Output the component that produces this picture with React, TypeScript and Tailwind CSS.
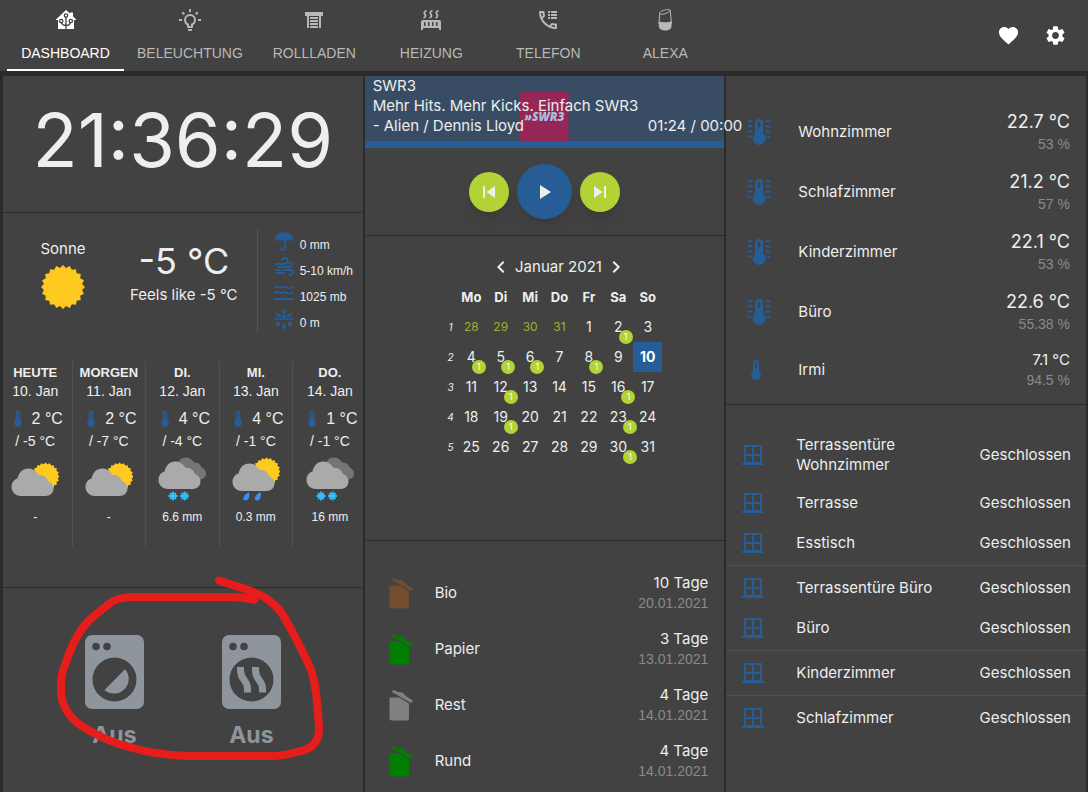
import React from 'react';
import { MdChevronLeft, MdChevronRight, MdFavorite, MdPlayArrow, MdSettings, MdSkipNext, MdSkipPrevious } from 'react-icons/md';

type ForecastKind = 'partly' | 'snow' | 'shower';

interface ForecastDay {
  day: string;
  date: string;
  high: string;
  low: string;
  kind: ForecastKind;
  amount: string;
}

interface Sensor {
  room: string;
  temp: string;
  humidity: string;
}

// --- Data ---
const forecast: ForecastDay[] = [
  { day: 'HEUTE', date: '10. Jan', high: '2 °C', low: '/ -5 °C', kind: 'partly', amount: '-' },
  { day: 'MORGEN', date: '11. Jan', high: '2 °C', low: '/ -7 °C', kind: 'partly', amount: '-' },
  { day: 'DI.', date: '12. Jan', high: '4 °C', low: '/ -4 °C', kind: 'snow', amount: '6.6 mm' },
  { day: 'MI.', date: '13. Jan', high: '4 °C', low: '/ -1 °C', kind: 'shower', amount: '0.3 mm' },
  { day: 'DO.', date: '14. Jan', high: '1 °C', low: '/ -1 °C', kind: 'snow', amount: '16 mm' },
];

const sensors: Sensor[] = [
  { room: 'Wohnzimmer', temp: '22.7 °C', humidity: '53 %' },
  { room: 'Schlafzimmer', temp: '21.2 °C', humidity: '57 %' },
  { room: 'Kinderzimmer', temp: '22.1 °C', humidity: '53 %' },
  { room: 'Büro', temp: '22.6 °C', humidity: '55.38 %' },
];

const windowGroups = [
  ['Terrassentüre Wohnzimmer', 'Terrasse', 'Esstisch'],
  ['Terrassentüre Büro', 'Büro'],
  ['Kinderzimmer'],
  ['Schlafzimmer'],
];

const bins = [
  { name: 'Bio', days: '10 Tage', date: '20.01.2021', color: 'text-[#734d2f]' },
  { name: 'Papier', days: '3 Tage', date: '13.01.2021', color: 'text-[#008000]' },
  { name: 'Rest', days: '4 Tage', date: '14.01.2021', color: 'text-[#808080]' },
  { name: 'Rund', days: '4 Tage', date: '14.01.2021', color: 'text-[#008000]' },
];

const weekdays = ['Mo', 'Di', 'Mi', 'Do', 'Fr', 'Sa', 'So'];
const weeks = [
  [28, 29, 30, 31, 1, 2, 3],
  [4, 5, 6, 7, 8, 9, 10],
  [11, 12, 13, 14, 15, 16, 17],
  [18, 19, 20, 21, 22, 23, 24],
  [25, 26, 27, 28, 29, 30, 31],
];
const eventDays = [2, 4, 5, 6, 8, 12, 16, 19, 23, 30];
const today = 10;

// --- Icons ---
const HomeTreeIcon = () => (
  <svg viewBox="0 0 24 24" className="w-6 h-6">
    <path fill="currentColor" d="M12 2 16 5.6V4.5h3v3.8L22.5 12H20v9H4v-9H1.500z" />
    <g fill="none" stroke="#424242" strokeWidth="1.300">
      <path d="M12 21V9M12 17.500C9.500 17.500 8 16.500 7.500 14.500M12 17.500c2.500 0 4-1 4.500-3" />
      <circle cx="12" cy="7.500" r="1.700" />
      <circle cx="7.200" cy="13" r="1.700" />
      <circle cx="16.800" cy="13" r="1.700" />
    </g>
  </svg>
);

const BulbIcon = () => (
  <svg viewBox="0 0 24 24" className="w-6 h-6" fill="currentColor">
    <path d="M20,11H23V13H20V11M1,11H4V13H1V11M13,1V4H11V1H13M4.92,3.5L7.05,5.64L5.63,7.05L3.5,4.93L4.92,3.5M16.95,5.63L19.07,3.5L20.5,4.93L18.37,7.05L16.95,5.63M12,6A6,6 0 0,1 18,12C18,14.22 16.79,16.16 15,17.2V19A1,1 0 0,1 14,20H10A1,1 0 0,1 9,19V17.2C7.21,16.16 6,14.22 6,12A6,6 0 0,1 12,6M14,21V22A1,1 0 0,1 13,23H11A1,1 0 0,1 10,22V21H14M11,18H13V15.87C14.73,15.43 16,13.86 16,12A4,4 0 0,0 12,8A4,4 0 0,0 8,12C8,13.86 9.27,15.43 11,15.87V18Z" />
  </svg>
);

const ShutterIcon = () => (
  <svg viewBox="0 0 24 24" className="w-6 h-6" fill="currentColor">
    <path d="M3 4h18v4h-2v12h-2V8H7v12H5V8H3zM8 9h8v2H8zM8 12h8v2H8zM8 15h8v2H8zM8 18h8v2H8z" />
  </svg>
);

const RadiatorIcon = () => (
  <svg viewBox="0 0 24 24" className="w-6 h-6" fill="currentColor">
    <path fillRule="evenodd" d="M4 12h16a2 2 0 0 1 2 2v8h-2v-2H4v2H2v-8a2 2 0 0 1 2-2zm1 2v4h1.500v-4zm4 0v4h1.500v-4zm4 0v4h1.500v-4zm4 0v4h1.500v-4z" />
    <path fill="none" stroke="currentColor" strokeWidth="1.800" d="M7.500 2.500C4.500 4 5 5.500 6 6.500s.5 2.500-1.500 3.500M13.500 2.500C10.500 4 11 5.500 12 6.500s.5 2.500-1.500 3.500M19.500 2.500C16.500 4 17 5.500 18 6.500s.5 2.500-1.500 3.500" />
  </svg>
);

const PhoneLogIcon = () => (
  <svg viewBox="0 0 24 24" className="w-6 h-6" fill="currentColor">
    <path d="M20,15.5C18.8,15.5 17.5,15.3 16.4,14.9H16.1C15.8,14.9 15.6,15 15.4,15.2L13.2,17.4C10.4,15.9 8,13.6 6.6,10.8L8.8,8.6C9.1,8.3 9.2,7.9 9,7.6C8.7,6.5 8.5,5.2 8.5,4C8.5,3.5 8,3 7.5,3H4C3.5,3 3,3.500 3,4C3,13.4 10.6,21 20,21C20.5,21 21,20.500 21,20V16.5C21,16 20.5,15.5 20,15.5M5,5H6.5C6.6,5.9 6.8,6.8 7,7.6L5.8,8.8C5.4,7.6 5.1,6.3 5,5M19,19C17.7,18.9 16.4,18.6 15.2,18.2L16.4,17C17.2,17.2 18.1,17.4 19,17.4V19Z" />
    <path d="M12 3h2v2h-2zM15 3h6v2h-6zM12 6h2v2h-2zM15 6h6v2h-6zM12 9h2v2h-2zM15 9h6v2h-6z" />
  </svg>
);

const EchoIcon = () => (
  <svg viewBox="0 0 24 24" className="w-6 h-6">
    <path fill="none" stroke="currentColor" strokeWidth="1" d="M6 16 6.800 4.500C8 2.500 15 .8 17.200 2L18.500 16M6.800 5.500c1.500 2 9-.5 10.400-3" />
    <path fill="currentColor" d="M5.800 13.500c3 1 9.500 1 12.800 0v4.500c0 6-12.800 6-12.800 0z" />
  </svg>
);

const tabs = [
  { label: 'DASHBOARD', Icon: HomeTreeIcon },
  { label: 'BELEUCHTUNG', Icon: BulbIcon },
  { label: 'ROLLLADEN', Icon: ShutterIcon },
  { label: 'HEIZUNG', Icon: RadiatorIcon },
  { label: 'TELEFON', Icon: PhoneLogIcon },
  { label: 'ALEXA', Icon: EchoIcon },
];

const ThermometerIcon = ({ className }: { className: string }) => (
  <svg viewBox="0 0 10 20" className={className} fill="#265d97">
    <path fillRule="evenodd" d="M2 3a3 3 0 0 1 6 0v8.200a4.800 4.800 0 1 1-6 0zm2.200.2V8h1.600V3.200a.8.8 0 0 0-1.600 0z" />
  </svg>
);

const RoomThermometerIcon = () => (
  <svg viewBox="0 0 24 26" className="w-6 h-[26px]" fill="#265d97">
    <path fillRule="evenodd" d="M8 4a4 4 0 0 1 8 0v10.500a6.400 6.400 0 1 1-8 0zm2.800 0v3.500a1.200 1.200 0 0 0 2.400 0V4a1.200 1.200 0 0 0-2.400 0z" />
    <path d="M.5 1.300h5v2h-5zM1 6.300h4.500v2H1zM.5 11.500h5v2h-5zM.5 16.700h2.500v2H.5zM3.800 16.700H5v2H3.800zM18.500 1.300h5v2h-5zM18.500 6.300H23v2h-4.500zM18.500 11.500h5v2h-5zM21 16.700h2.500v2H21zM19 16.700h1.200v2H19z" />
  </svg>
);

const WindowIcon = () => (
  <svg viewBox="0 0 22 22" className="w-[22px] h-[22px] shrink-0" fill="#265d97">
    <path fillRule="evenodd" d="M2 1h18v18h2v2H0v-2h2zm2 2v7h6V3zm8 0v7h6V3zm-8 9v6h6v-6zm8 0v6h6v-6z" />
  </svg>
);

const BinIcon = ({ className }: { className: string }) => (
  <svg viewBox="0 0 24 32" className={`w-6 h-8 ${className}`} fill="currentColor">
    <path d="M.5 8.500h10l9.500 6V29a2.500 2.500 0 0 1-2.500 2.500H3A2.500 2.500 0 0 1 .5 29z" />
    <path d="M4.200.7 9 3l4.500.5 4 4 6.200 4-1.200 2.800L2.800 3z" />
  </svg>
);

const UmbrellaIcon = () => (
  <svg viewBox="0 0 20 20" className="mt-0.5 w-5 h-5">
    <path fill="#265d97" d="M1 9.500C1 4.500 5 1 10 1s9 3.500 9 8.500z" />
    <path fill="none" stroke="#265d97" strokeWidth="1.800" d="M11 9v8a2.200 2.200 0 0 1-4.400 0v-.8" />
  </svg>
);

const WindIcon = () => (
  <svg viewBox="0 0 20 20" className="mt-0.5 w-5 h-5" fill="none" stroke="#265d97" strokeWidth="1.800">
    <path d="M1 7h9.500a3 3 0 1 0-3-3.200M3 10h12.500a2.300 2.300 0 1 0-2.200-3M1 13h6M2 16h9M9 13h7.500a2.500 2.500 0 1 1-2 4" />
  </svg>
);

const PressureIcon = () => (
  <svg viewBox="0 0 20 20" className="mt-0.5 w-5 h-5" fill="none" stroke="#265d97" strokeWidth="1.800">
    <path d="M0 4.500c3-2 4 0 6.500 0s3-2 6.500 0 4.500-1 7 0M0 10c3-2 4 0 6.500 0s3-2 6.500 0 4.500-1 7 0M0 16h20" />
  </svg>
);

const SnowLineIcon = () => (
  <svg viewBox="0 0 20 20" className="mt-0.5 w-5 h-5" fill="none" stroke="#265d97" strokeWidth="1.400">
    <path d="M0 10h20M10 0v9M7 1l3 3 3-3M10 9 2 4M10 9l8-5M2 7.500l3-.5-.5-3M18 7.500l-3-.5.5-3" />
    <path fill="#265d97" stroke="none" d="M4 12c3 3.500 2 5.500 0 5.500S1 15.500 4 12zM16 12c3 3.500 2 5.500 0 5.500s-3-2 0-5.500zM10 14.500c3 3.500 2 5.500 0 5.500s-3-2 0-5.500z" />
  </svg>
);

const conditions = [
  { text: '0 mm', Icon: UmbrellaIcon },
  { text: '5-10 km/h', Icon: WindIcon },
  { text: '1025 mb', Icon: PressureIcon },
  { text: '0 m', Icon: SnowLineIcon },
];

// Points of a toothed disc, used for the sun
const sunPoints = (cx: number, cy: number, r: number, teeth = 20) =>
  Array.from({ length: teeth * 2 }, (_, i) => {
    const radius = i % 2 === 0 ? r : r * 0.88;
    const angle = (Math.PI * i) / teeth;
    return `${(cx + radius * Math.cos(angle)).toFixed(1)},${(cy + radius * Math.sin(angle)).toFixed(1)}`;
  }).join(' ');

const Cloud = ({ x = 0, y = 0, fill }: { x?: number; y?: number; fill: string }) => (
  <path
    transform={`translate(${x} ${y})`}
    fill={fill}
    d="M10 28C4 28 .5 23.500.5 19c0-4.500 3-8 6-8.500C8 4 12 .5 17 .5c4.500 0 7.500 2 9.500 5 1.500 2 3 1 5.500 2 3 1 4 3.500 5 5.500 3.500 1.500 5.500 4 5.500 7.500 0 4.500-3.500 7.500-8 7.500z"
  />
);

const flake = (x: number) => (
  <path key={x} stroke="#38bdf8" strokeWidth="1.800" d={`M${x - 4.5} 41h9M${x} 36.500v9M${x - 3} 38l6 6M${x + 3} 38l-6 6`} />
);

const drop = (x: number) => (
  <path key={x} fill="#3b8ef5" d={`M${x + 3} 37c1 4 0 8.500-3.500 8.500s-3.500-4.500 3.500-8.500z`} />
);

const WeatherIcon = ({ kind }: { kind: ForecastKind }) => (
  <svg viewBox="0 0 48 48" className="w-12 h-12">
    {kind === 'snow' && (
      <>
        <g transform="translate(14 2) scale(0.8)"><Cloud fill="#757575" /></g>
        <Cloud y={6} fill="#aaaaaa" />
        {[15, 26.5].map(flake)}
      </>
    )}
    {kind === 'shower' && (
      <>
        <polygon fill="#ffca1f" points={sunPoints(34.5, 16.5, 14)} />
        <Cloud y={8} fill="#aaaaaa" />
        {[14, 25.5].map(drop)}
      </>
    )}
    {kind === 'partly' && (
      <>
        <polygon fill="#ffca1f" points={sunPoints(34.5, 21.5, 14)} />
        <Cloud y={13} fill="#aaaaaa" />
      </>
    )}
  </svg>
);

const MachineIcon = ({ children }: { children: React.ReactNode }) => (
  <svg viewBox="0 0 59 74" className="w-[59px] h-[74px]">
    <rect width="59" height="74" rx="7" fill="#8f959c" />
    <circle cx="11" cy="11.500" r="3.800" fill="#424242" />
    <circle cx="22" cy="11.500" r="3.800" fill="#424242" />
    <circle cx="29.500" cy="44.500" r="22" fill="#424242" />
    {children}
  </svg>
);

// --- Panels ---
const ClockPanel = () => (
  <section className="bg-[#424242] pt-6 pb-8 text-center text-[74px] leading-[80px]">21:36:29</section>
);

const WeatherPanel = () => (
  <section className="bg-[#424242] pt-4 pb-10">
    <div className="flex">
      <div className="w-[120px] pt-2.5 flex flex-col items-center text-[15px] leading-5">
        Sonne
        <svg viewBox="0 0 44 44" className="mt-1.5 w-11 h-11">
          <polygon fill="#ffca1f" points={sunPoints(22, 22, 22)} />
        </svg>
      </div>
      <div className="grow pt-3 pr-3 text-center">
        <div className="text-[36px] leading-10">-5 °C</div>
        <div className="mt-1 text-[15px] leading-5">Feels like -5 °C</div>
      </div>
      <ul className="w-[106px] pl-4 border-l border-[#555555] font-['Liberation_Sans',sans-serif] text-xs leading-5">
        {conditions.map(({ text, Icon }) => (
          <li key={text} className="flex items-start gap-1.5">
            <Icon />
            <span className="pt-1.5">{text}</span>
          </li>
        ))}
      </ul>
    </div>
    <div className="mt-7 -mx-1 grid grid-cols-5 font-['Liberation_Sans',sans-serif] text-sm leading-5 text-center divide-x divide-[#505050]">
      {forecast.map(f => (
        <div key={f.date} className="pt-1 pb-5 flex flex-col items-center">
          <div className="text-[13px] leading-4 font-bold">{f.day}</div>
          <div>{f.date}</div>
          <div className="mt-1.5 pl-1.5 flex items-center gap-2.5 text-base leading-6">
            <ThermometerIcon className="w-2 h-4" />
            {f.high}
          </div>
          <div>{f.low}</div>
          <div className="mt-1"><WeatherIcon kind={f.kind} /></div>
          <div className="mt-1 text-xs leading-5">{f.amount}</div>
        </div>
      ))}
    </div>
  </section>
);

const MachinesPanel = () => (
  <section className="relative grow bg-[#424242] pt-[47px] pb-7 flex justify-center gap-[78px] text-[23px] leading-7 font-bold text-[#8f959c]">
    <div className="flex flex-col items-center gap-3">
      <MachineIcon>
        <path fill="#8f959c" d="M40 34.300A14.600 14.600 0 0 1 19.500 55z" />
      </MachineIcon>
      Aus
    </div>
    <div className="flex flex-col items-center gap-3">
      <MachineIcon>
        <path fill="none" stroke="#8f959c" strokeWidth="7" d="M18.500 32v3c0 11 7 9 7 19v3.500M33.500 32v3c0 11 7 9 7 19v3.500" />
      </MachineIcon>
      Aus
    </div>
    {/* Marker around both machines */}
    <svg viewBox="0 0 274 188" className="absolute left-[51px] -top-3 z-20 w-[274px] h-[188px]" fill="none" stroke="#e71d1c" strokeWidth="8" strokeLinecap="round" strokeLinejoin="round">
      <path d="M165 4.500C180 10 198 14 208 20C222 28 228 36 234 48C243 64 252 82 257 94C263 110 264 135 265 153C265 168 255 174 243 176C225 181 215 180 199 180L133 180C110 179 95 177 79 172C60 168 45 160 29 151C12 140 8 126 7 118C7 105 7 98 10 92C15 76 22 60 30 50C38 40 48 34 55 28C61 23 65 22 79 21L176 21C188 21 193 22 200 24" />
    </svg>
  </section>
);

const PlayerPanel = () => (
  <section className="bg-[#424242]">
    <div className="relative z-10 bg-[#384d63] pb-[5px] text-[15px] leading-5">
      <div className="absolute bottom-0 left-1/2 -translate-x-1/2 w-[49px] h-[49px] bg-[#962655] flex items-center justify-center font-['Open_Sans',sans-serif] text-xs font-extrabold italic text-[#a9bfdd]">
        »SWR3
      </div>
      <div className="relative pl-2">
        <div>SWR3</div>
        <div>Mehr Hits. Mehr Kicks. Einfach SWR3</div>
        <div className="-mr-[18px] flex justify-between whitespace-nowrap">
          <span>- Alien / Dennis Lloyd</span>
          <span>01:24 / 00:00</span>
        </div>
      </div>
    </div>
    <div className="h-[7px] bg-[#265d97]"></div>
    <div className="py-4 flex items-center justify-center gap-2">
      <button aria-label="Zurück" className="w-10 h-10 rounded-full bg-[#b2d235] shadow-lg flex items-center justify-center">
        <MdSkipPrevious size={24} />
      </button>
      <button aria-label="Wiedergabe" className="w-[55px] h-[55px] rounded-full bg-[#265d97] shadow-lg flex items-center justify-center">
        <MdPlayArrow size={24} />
      </button>
      <button aria-label="Weiter" className="w-10 h-10 rounded-full bg-[#b2d235] shadow-lg flex items-center justify-center">
        <MdSkipNext size={24} />
      </button>
    </div>
  </section>
);

const CalendarPanel = () => {
  const renderDay = (day: number, week: number) => {
    const outside = week === 0 && day > 7;
    const isToday = day === today;
    return (
      <td
        key={day}
        className={isToday ? 'w-[29px] h-[30px] bg-[#265d97] font-bold text-white' : outside ? 'w-[29px] h-[30px] text-xs text-[#9ab32f]' : 'w-[29px] h-[30px]'}
      >
        <span className="relative">
          {day}
          {!outside && eventDays.includes(day) && (
            <span className="absolute left-full top-3 -ml-1 w-3.5 h-3.5 rounded-full bg-[#b2d235] text-[9px] leading-[14px] text-white">1</span>
          )}
        </span>
      </td>
    );
  };

  return (
    <section className="bg-[#424242] pt-[19px] pb-[78px] flex flex-col items-center">
      <div className="pl-7 flex items-center text-[15px] leading-6">
        <button aria-label="Voriger Monat"><MdChevronLeft size={24} /></button>
        <span className="px-0.5">Januar 2021</span>
        <button aria-label="Nächster Monat"><MdChevronRight size={24} /></button>
      </div>
      <div className="mt-[3px] pl-[18px]">
        <table className="w-[218px] border-collapse text-center text-sm leading-5">
          <thead>
            <tr>
              <th className="w-3"></th>
              {weekdays.map(d => <th key={d} className="w-[29px] h-[30px] text-[13px] font-bold">{d}</th>)}
            </tr>
          </thead>
          <tbody>
            {weeks.map((days, i) => (
              <tr key={i}>
                <th className="w-3 text-[10px] italic font-normal">{i + 1}</th>
                {days.map(day => renderDay(day, i))}
              </tr>
            ))}
          </tbody>
        </table>
      </div>
    </section>
  );
};

const BinsPanel = () => (
  <section className="grow bg-[#424242] pt-6 pb-1 pl-6 pr-4 text-[15px] leading-5">
    {bins.map(b => (
      <div key={b.name} className="py-2 flex items-center">
        <BinIcon className={b.color} />
        <div className="pl-[22px] grow">{b.name}</div>
        <div className="text-right">
          <div>{b.days}</div>
          <div className="font-['Liberation_Sans',sans-serif] text-sm leading-5 text-[#8a8a8a]">{b.date}</div>
        </div>
      </div>
    ))}
  </section>
);

const SensorsPanel = () => (
  <section className="bg-[#424242] pt-[26px] pb-1.5 pl-[21px] pr-4 text-[15px]">
    {sensors.map(s => (
      <div key={s.room} className="py-2 flex items-center">
        <div className="w-[51px]"><RoomThermometerIcon /></div>
        <div className="grow">{s.room}</div>
        <div className="text-right">
          <div className="text-lg leading-6">{s.temp}</div>
          <div className="font-['Liberation_Sans',sans-serif] text-sm leading-5 text-[#8a8a8a]">{s.humidity}</div>
        </div>
      </div>
    ))}
    <div className="py-2 flex items-center">
      <div className="w-[51px] pl-1"><ThermometerIcon className="w-2.5 h-5" /></div>
      <div className="grow">Irmi</div>
      <div className="text-right">
        <div className="leading-5">7.1 °C</div>
        <div className="font-['Liberation_Sans',sans-serif] text-sm leading-5 text-[#8a8a8a]">94.5 %</div>
      </div>
    </div>
  </section>
);

const WindowsPanel = () => (
  <section className="grow bg-[#424242] pt-5 divide-y divide-[#505050] text-[15px] leading-5">
    {windowGroups.map(group => (
      <div key={group[0]} className="py-0.5">
        {group.map(name => (
          <div key={name} className="min-h-10 py-2 pl-4 pr-[15px] flex items-center">
            <WindowIcon />
            <div className="ml-8 w-[140px]">{name}</div>
            <div className="grow text-right">Geschlossen</div>
          </div>
        ))}
      </div>
    ))}
  </section>
);

export default function App() {
  return (
    <div className="min-h-screen bg-[#2b2b2b] flex flex-col font-['Inter',sans-serif] text-[#eeeeee]">
      <header className="bg-[#424242] pl-[7px] pr-[21px] flex items-center justify-between">
        <nav className="flex font-['Liberation_Sans',sans-serif] text-sm leading-5">
          {tabs.map(({ label, Icon }, i) => (
            <button
              key={label}
              className={`min-w-[117px] px-[13px] pt-2 pb-1.5 flex flex-col items-center gap-[11px] border-b-2 ${i === 0 ? 'border-white text-white' : 'border-transparent text-[#b8b8b8]'}`}
            >
              <Icon />
              {label}
            </button>
          ))}
        </nav>
        <div className="flex items-center gap-6 text-white">
          <button aria-label="Favoriten"><MdFavorite size={23} /></button>
          <button aria-label="Einstellungen"><MdSettings size={23} /></button>
        </div>
      </header>

      <main className="grow pt-[5px] pl-[3px] pr-[2px] grid grid-cols-3 gap-[2px]">
        <div className="flex flex-col gap-px">
          <ClockPanel />
          <WeatherPanel />
          <MachinesPanel />
        </div>
        <div className="flex flex-col gap-px">
          <PlayerPanel />
          <CalendarPanel />
          <BinsPanel />
        </div>
        <div className="flex flex-col gap-px">
          <SensorsPanel />
          <WindowsPanel />
        </div>
      </main>
    </div>
  );
}
